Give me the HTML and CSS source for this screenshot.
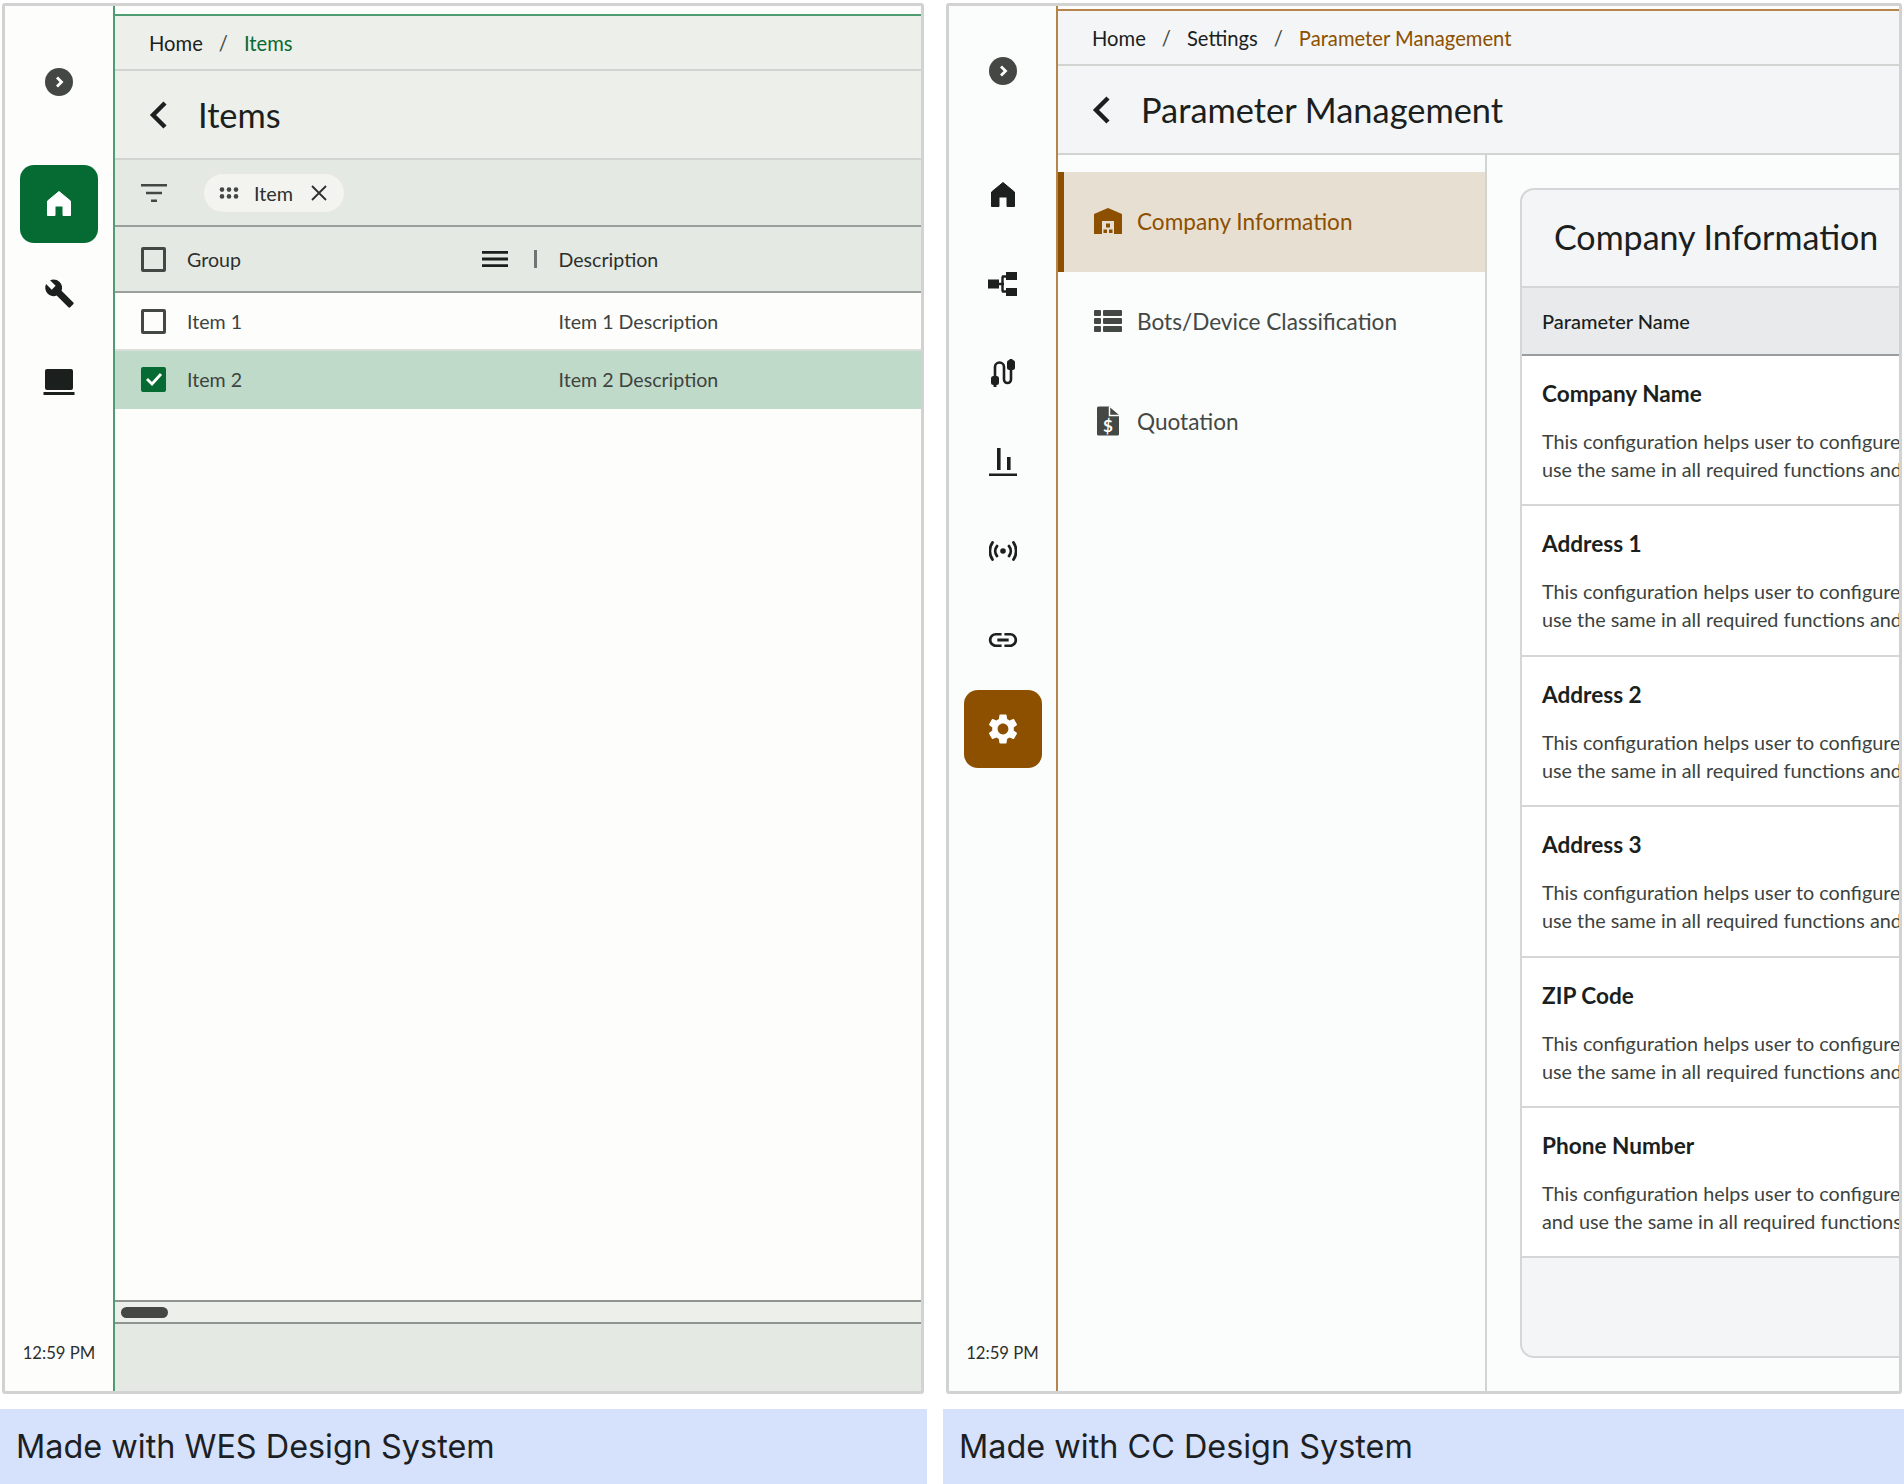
FILE: index.html
```html
<!DOCTYPE html>
<html lang="en">

<head>
    <meta charset="UTF-8">
    <title>Design Systems</title>
    <link rel="stylesheet" href="styles.css">
</head>

<body>
    <div class="page">

        <!-- WES -->
        <section class="column">
            <div class="frame frame-wes">
                <aside class="rail">
                    <span class="toggle"><svg width="12" height="14" viewBox="0 0 12 14"><path d="M4 2.500 8.500 7 4 11.500" fill="none" stroke="#fff" stroke-width="2.800"/></svg></span>
                    <nav class="rail-nav">
                        <a class="rail-item active"><svg width="26" height="28" viewBox="0 0 26 28"><path d="M13 1.500 24.500 11v14.500h-7.500V16H9v9.500H1.500V11z" fill="#fff" stroke="#fff" stroke-linejoin="round"/></svg></a>
                        <a class="rail-item"><svg width="31" height="31" viewBox="0 0 24 24"><path d="M22.700 19l-9.100-9.100c.9-2.300.4-5-1.500-6.900-2-2-5-2.400-7.400-1.300L9 6 6 9 1.600 4.700C.4 7.100.9 10.100 2.900 12.100c1.900 1.900 4.600 2.400 6.900 1.500l9.100 9.100c.4.4 1 .4 1.400 0l2.300-2.300c.5-.4.5-1.100.1-1.400z" fill="#1b1f1d"/></svg></a>
                        <a class="rail-item"><svg width="32" height="26" viewBox="0 0 32 26"><rect x="2" y="0" width="28" height="21" rx="2" fill="#1b1f1d"/><rect x="0.500" y="23" width="31" height="3" fill="#1b1f1d"/></svg></a>
                    </nav>
                    <div class="clock">12:59 PM</div>
                </aside>
                <main class="main">
                    <div class="strip"></div>
                    <div class="crumbs">
                        <span>Home</span><span class="sep">/</span><span class="current">Items</span>
                    </div>
                    <div class="title-bar">
                        <svg class="back" width="20" height="30" viewBox="0 0 20 30"><path d="M16 3 4 15l12 12" fill="none" stroke="#1b1f1d" stroke-width="4.400"/></svg>
                        <h1>Items</h1>
                    </div>
                    <div class="filter-bar">
                        <svg class="filter-icon" width="26" height="18" viewBox="0 0 26 18"><path d="M0 1.300h26M5 9h16M10 16.700h6" stroke="#434845" stroke-width="2.600"/></svg>
                        <div class="chip">
                            <svg width="20" height="12" viewBox="0 0 20 12"><g fill="#434845"><circle cx="3" cy="2.600" r="2.300"/><circle cx="10" cy="2.600" r="2.300"/><circle cx="17" cy="2.600" r="2.300"/><circle cx="3" cy="9.400" r="2.300"/><circle cx="10" cy="9.400" r="2.300"/><circle cx="17" cy="9.400" r="2.300"/></g></svg>
                            <span>Item</span>
                            <svg width="16" height="16" viewBox="0 0 16 16"><path d="M1 1l14 14M15 1 1 15" stroke="#2c302e" stroke-width="1.800"/></svg>
                        </div>
                    </div>
                    <div class="grid-row grid-head">
                        <span class="check"></span>
                        <span class="cell-group">Group</span>
                        <svg class="col-menu" width="26" height="16" viewBox="0 0 26 16"><path d="M0 1.400h26M0 8h26M0 14.600h26" stroke="#1b1f1d" stroke-width="2.800"/></svg>
                        <span class="col-sep"></span>
                        <span class="cell-desc">Description</span>
                    </div>
                    <div class="grid-row">
                        <span class="check"></span>
                        <span class="cell-group">Item 1</span>
                        <span class="cell-desc">Item 1 Description</span>
                    </div>
                    <div class="grid-row selected">
                        <span class="check checked"><svg width="18" height="14" viewBox="0 0 18 14"><path d="M2 7l5 5 9-10" fill="none" stroke="#fff" stroke-width="2.800"/></svg></span>
                        <span class="cell-group">Item 2</span>
                        <span class="cell-desc">Item 2 Description</span>
                    </div>
                    <div class="grid-body"></div>
                    <div class="scroller"><span class="thumb"></span></div>
                    <div class="grid-foot"></div>
                </main>
            </div>
            <div class="caption">Made with WES Design System</div>
        </section>

        <!-- CC -->
        <section class="column">
            <div class="frame frame-cc">
                <aside class="rail">
                    <span class="toggle"><svg width="12" height="14" viewBox="0 0 12 14"><path d="M4 2.500 8.500 7 4 11.500" fill="none" stroke="#fff" stroke-width="2.800"/></svg></span>
                    <nav class="rail-nav">
                        <a class="rail-item"><svg width="26" height="28" viewBox="0 0 26 28"><path d="M13 1.500 24.500 11v14.500h-7.500V16H9v9.500H1.500V11z" fill="#1b1f1d" stroke="#1b1f1d" stroke-linejoin="round"/></svg></a>
                        <a class="rail-item"><svg width="29" height="24" viewBox="0 0 29 24"><g fill="#1b1f1d"><rect x="0" y="7.500" width="11" height="9"/><rect x="18" y="0" width="11" height="8"/><rect x="18" y="16" width="11" height="8"/></g><path d="M10 12h6M14.500 4.500v15M14 4.500h5M14 19.500h5" stroke="#1b1f1d" stroke-width="2.400" fill="none"/></svg></a>
                        <a class="rail-item"><svg width="26" height="28" viewBox="0 0 26 28"><g fill="#1b1f1d"><rect x="1" y="17" width="8" height="9" rx="2.500"/><rect x="17" y="1" width="8" height="10" rx="2.500"/><rect x="3.500" y="26" width="3" height="2"/><rect x="19.500" y="0" width="3" height="2"/></g><path d="M5 18V8a4.500 4.500 0 0 1 9 0V20.500a3.500 3.500 0 0 0 7 0V10" fill="none" stroke="#1b1f1d" stroke-width="2.600"/></svg></a>
                        <a class="rail-item"><svg width="28" height="28" viewBox="0 0 28 28"><g fill="#1b1f1d"><rect x="8" y="0" width="3.600" height="22"/><rect x="18" y="9" width="3.600" height="13"/><rect x="0" y="25.500" width="28" height="2.500"/></g></svg></a>
                        <a class="rail-item"><svg width="28" height="20" viewBox="0 0 28 20"><circle cx="14" cy="10" r="2.800" fill="#1b1f1d"/><path d="M8 5a8 8 0 0 0 0 10M20 5a8 8 0 0 1 0 10M3.500 1.500a15 15 0 0 0 0 17M24.500 1.500a15 15 0 0 1 0 17" fill="none" stroke="#1b1f1d" stroke-width="2.800" stroke-linecap="round"/></svg></a>
                        <a class="rail-item"><svg width="34" height="34" viewBox="0 0 24 24"><path d="M3.900 12c0-1.710 1.390-3.100 3.100-3.100h4V7H7c-2.760 0-5 2.240-5 5s2.240 5 5 5h4v-1.900H7c-1.710 0-3.100-1.390-3.100-3.100zM8 13h8v-2H8v2zm9-6h-4v1.900h4c1.710 0 3.100 1.390 3.100 3.100s-1.390 3.100-3.100 3.100h-4V17h4c2.760 0 5-2.240 5-5s-2.240-5-5-5z" fill="#1b1f1d"/></svg></a>
                        <a class="rail-item active"><svg width="36" height="36" viewBox="0 0 24 24"><path d="M19.140 12.940c.04-.3.06-.61.06-.94 0-.32-.02-.64-.07-.94l2.030-1.580c.18-.14.23-.41.12-.61l-1.920-3.320c-.12-.22-.37-.29-.59-.22l-2.390.96c-.5-.38-1.030-.7-1.620-.94l-.36-2.540c-.04-.24-.24-.41-.48-.41h-3.840c-.24 0-.43.17-.47.41l-.36 2.540c-.59.24-1.130.57-1.620.94l-2.390-.96c-.22-.08-.47 0-.59.22L2.740 8.870c-.12.21-.08.47.12.61l2.030 1.580c-.05.3-.09.63-.09.94s.02.64.07.94l-2.030 1.580c-.18.14-.23.41-.12.61l1.920 3.320c.12.22.37.29.59.22l2.390-.96c.5.38 1.030.7 1.620.94l.36 2.540c.05.24.24.41.48.41h3.840c.24 0 .44-.17.47-.41l.36-2.540c.59-.24 1.130-.56 1.620-.94l2.390.96c.22.08.47 0 .59-.22l1.920-3.320c.12-.22.07-.47-.12-.61l-2.010-1.580zM12 15.600c-1.980 0-3.600-1.620-3.600-3.600s1.620-3.600 3.600-3.600 3.600 1.620 3.600 3.600-1.620 3.600-3.600 3.600z" fill="#fff"/></svg></a>
                    </nav>
                    <div class="clock">12:59 PM</div>
                </aside>
                <main class="main">
                    <div class="strip"></div>
                    <div class="crumbs">
                        <span>Home</span><span class="sep">/</span><span>Settings</span><span class="sep">/</span><span class="current">Parameter Management</span>
                    </div>
                    <div class="title-bar">
                        <svg class="back" width="20" height="30" viewBox="0 0 20 30"><path d="M16 3 4 15l12 12" fill="none" stroke="#1b1f1d" stroke-width="4.400"/></svg>
                        <h1>Parameter Management</h1>
                    </div>
                    <div class="content">
                        <div class="side-menu">
                            <a class="menu-item active">
                                <svg width="28" height="26" viewBox="0 0 28 26"><path d="M14 0 28 6v20H0V6z" fill="#8c5000"/><rect x="8" y="13" width="12" height="13" fill="#e8dfd3"/><g fill="#8c5000"><rect x="12" y="15.500" width="4" height="4"/><rect x="9.500" y="21.500" width="3.500" height="3.500"/><rect x="15" y="21.500" width="3.500" height="3.500"/></g></svg>
                                <span>Company Information</span>
                            </a>
                            <a class="menu-item">
                                <svg width="28" height="22" viewBox="0 0 28 22"><g fill="#434845"><rect x="0" y="0" width="7" height="6" rx="1"/><rect x="9" y="0" width="19" height="6" rx="1"/><rect x="0" y="8" width="7" height="6" rx="1"/><rect x="9" y="8" width="19" height="6" rx="1"/><rect x="0" y="16" width="7" height="6" rx="1"/><rect x="9" y="16" width="19" height="6" rx="1"/></g></svg>
                                <span>Bots/Device Classification</span>
                            </a>
                            <a class="menu-item">
                                <svg width="28" height="30" viewBox="0 0 28 30"><path d="M3 2a1.500 1.500 0 0 1 1.500-1.500H15L25 9v19a1.500 1.500 0 0 1-1.500 1.500h-19A1.500 1.500 0 0 1 3 28z" fill="#434845"/><path d="M15.500 1v8.500H25" fill="none" stroke="#fbfcfc" stroke-width="1.500"/><text x="14" y="25.500" text-anchor="middle" font-family="Lato" font-weight="700" font-size="17" fill="#fff">$</text></svg>
                                <span>Quotation</span>
                            </a>
                        </div>
                        <div class="detail">
                            <div class="card">
                                <h2>Company Information</h2>
                                <div class="card-head">Parameter Name</div>
                                <div class="param">
                                    <h3>Company Name</h3>
                                    <p>This configuration helps user to configure the company name and<br>use the same in all required functions and reports</p>
                                </div>
                                <div class="param">
                                    <h3>Address 1</h3>
                                    <p>This configuration helps user to configure the company address and<br>use the same in all required functions and reports</p>
                                </div>
                                <div class="param">
                                    <h3>Address 2</h3>
                                    <p>This configuration helps user to configure the company address and<br>use the same in all required functions and reports</p>
                                </div>
                                <div class="param">
                                    <h3>Address 3</h3>
                                    <p>This configuration helps user to configure the company address and<br>use the same in all required functions and reports</p>
                                </div>
                                <div class="param">
                                    <h3>ZIP Code</h3>
                                    <p>This configuration helps user to configure the company ZIP code and<br>use the same in all required functions and reports</p>
                                </div>
                                <div class="param">
                                    <h3>Phone Number</h3>
                                    <p>This configuration helps user to configure the phone number<br>and use the same in all required functions and reports</p>
                                </div>
                                <div class="card-foot"></div>
                            </div>
                        </div>
                    </div>
                </main>
            </div>
            <div class="caption">Made with CC Design System</div>
        </section>

    </div>
</body>

</html>
```

FILE: styles.css
```css
* {
    box-sizing: border-box;
}

html,
body {
    margin: 0;
    padding: 0;
    background-color: #fff;
}

body {
    font-family: 'Lato', 'Noto Sans', sans-serif;
    color: #1b1f1d;
}

.page {
    display: grid;
    grid-template-columns: 927px 961px;
    column-gap: 16px;
    width: 1904px;
    height: 1484px;
    overflow: hidden;
}

.column {
    padding-top: 3px;
}

.frame {
    display: flex;
    height: 1391px;
    border: 3px solid #d2d2d2;
    border-radius: 3px;
    overflow: hidden;
    background-color: #fdfdfc;
}

.frame-wes {
    width: 922px;
    margin-left: 2px;
    --accent: #056b33;
    --accent-line: #4f9b72;
    --band: #edefea;
    --band-dark: #e5e9e3;
}

.frame-cc {
    width: 956px;
    margin-left: 3px;
    --accent: #8c5000;
    --accent-line: #b5854c;
    --band: #f4f5f7;
    --band-dark: #e8eaec;
    background-color: #fbfcfc;
}

.caption {
    display: flex;
    align-items: center;
    height: 75px;
    margin-top: 15px;
    padding-left: 16px;
    background-color: #d6e2fc;
    font-family: 'Inter', sans-serif;
    font-size: 32.4px;
    color: #1c1f24;
}

/* left rail */
.rail {
    display: flex;
    flex-direction: column;
    align-items: center;
    flex: none;
    border-right: 2px solid var(--accent-line);
}

.frame-wes .rail {
    width: 110px;
    padding-top: 62px;
}

.frame-cc .rail {
    width: 109px;
    padding-top: 51px;
}

.toggle {
    display: flex;
    align-items: center;
    justify-content: center;
    width: 28px;
    height: 28px;
    border-radius: 50%;
    background-color: #434845;
}

.rail-nav {
    display: flex;
    flex-direction: column;
    gap: 11px;
}

.frame-wes .rail-nav {
    margin-top: 69px;
}

.frame-cc .rail-nav {
    margin-top: 71px;
}

.rail-item {
    display: flex;
    align-items: center;
    justify-content: center;
    width: 78px;
    height: 78px;
    border-radius: 14px;
}

.rail-item.active {
    background-color: var(--accent);
}

.clock {
    margin-top: auto;
    padding-bottom: 27px;
    font-size: 16.7px;
    line-height: 22px;
    color: #2c302e;
}

/* main area */
.main {
    display: flex;
    flex-direction: column;
    flex: 1;
    min-width: 0;
}

.strip {
    flex: none;
    background-color: #fdfdfc;
}

.frame-wes .strip {
    height: 8px;
}

.frame-cc .strip {
    height: 3px;
}

.crumbs {
    display: flex;
    align-items: center;
    flex: none;
    height: 57px;
    padding-left: 34px;
    border-top: 2px solid var(--accent-line);
    border-bottom: 2px solid #d2d4d2;
    background-color: var(--band);
    font-size: 20.2px;
}

.crumbs .sep {
    margin: 0 16px;
    color: #434845;
}

.crumbs .current {
    color: var(--accent);
}

.title-bar {
    display: flex;
    align-items: center;
    flex: none;
    height: 89px;
    padding-left: 34px;
    border-bottom: 2px solid #d2d4d2;
    background-color: var(--band);
}

.title-bar h1 {
    margin: 0 0 0 29px;
    font-size: 34.4px;
    font-weight: 400;
}

/* WES grid */
.filter-bar {
    display: flex;
    align-items: center;
    flex: none;
    height: 67px;
    padding-left: 26px;
    border-bottom: 2px solid #9a9f9b;
    background-color: var(--band-dark);
}

.chip {
    display: flex;
    align-items: center;
    height: 38px;
    margin-left: 37px;
    padding: 0 17px 0 15px;
    border-radius: 19px;
    background-color: #f3f4f0;
    font-size: 19.8px;
    color: #2c302e;
}

.chip span {
    margin: 0 18px 0 15px;
}

.grid-row {
    display: flex;
    align-items: center;
    flex: none;
    position: relative;
    height: 58px;
    padding-left: 26px;
    border-bottom: 2px solid #dcdedb;
    font-size: 19.6px;
    color: #3d4340;
}

.grid-head {
    height: 66px;
    border-bottom-color: #9a9f9b;
    background-color: var(--band-dark);
    color: #2c302e;
}

.grid-row.selected {
    background-color: #c0dac9;
    border-bottom-color: #c0dac9;
}

.check {
    display: flex;
    align-items: center;
    justify-content: center;
    flex: none;
    width: 25px;
    height: 25px;
    border: 3px solid #434845;
    border-radius: 2px;
}

.check.checked {
    border-color: var(--accent);
    background-color: var(--accent);
}

.cell-group {
    width: 371.5px;
    margin-left: 21px;
}

.col-menu {
    position: absolute;
    left: 367px;
    top: 24px;
}

.col-sep {
    position: absolute;
    left: 419px;
    top: 23px;
    width: 3px;
    height: 18px;
    background-color: #6f7572;
}

.grid-body {
    flex: 1;
}

.scroller {
    display: flex;
    align-items: center;
    flex: none;
    height: 24px;
    padding-left: 6px;
    border-top: 2px solid #8e948f;
    border-bottom: 2px solid #8e948f;
    background-color: var(--band);
}

.thumb {
    width: 47px;
    height: 11px;
    border-radius: 6px;
    background-color: #434845;
}

.grid-foot {
    flex: none;
    height: 67px;
    background-color: var(--band-dark);
}

/* CC content */
.content {
    display: flex;
    flex: 1;
    min-height: 0;
}

.side-menu {
    flex: none;
    width: 429px;
    padding-top: 17px;
    border-right: 2px solid #d2d4d2;
}

.menu-item {
    display: flex;
    align-items: center;
    gap: 15px;
    height: 100px;
    padding-left: 36px;
    padding-bottom: 2px;
    font-size: 22.6px;
    color: #434845;
}

.menu-item.active {
    padding-left: 30px;
    border-left: 6px solid var(--accent);
    background-color: #e8dfd3;
    color: var(--accent);
}

.detail {
    flex: 1;
    min-width: 0;
    padding: 33px 0 0 33px;
    overflow: hidden;
}

.card {
    display: flex;
    flex-direction: column;
    width: 640px;
    height: 1170px;
    border: 2px solid #d4d6d8;
    border-radius: 14px 0 0 14px;
    background-color: var(--band);
    overflow: hidden;
}

.card h2 {
    display: flex;
    align-items: center;
    flex: none;
    height: 98px;
    margin: 0;
    padding: 0 0 3px 32px;
    border-bottom: 2px solid #d4d6d8;
    font-size: 34px;
    font-weight: 400;
}

.card-head {
    display: flex;
    align-items: center;
    flex: none;
    height: 68px;
    padding-left: 20px;
    border-bottom: 2px solid #9a9da0;
    background-color: var(--band-dark);
    font-size: 20px;
    font-weight: 500;
}

.param {
    flex: none;
    height: 150.4px;
    padding: 25px 0 0 20px;
    border-bottom: 2px solid #d4d6d8;
    background-color: #fff;
    white-space: nowrap;
}

.param h3 {
    margin: 0 0 20px;
    font-size: 22.6px;
    line-height: 26px;
    font-weight: 700;
}

.param p {
    margin: 0;
    font-size: 19.8px;
    line-height: 28px;
    color: #3d4340;
}

.card-foot {
    flex: 1;
}
```
